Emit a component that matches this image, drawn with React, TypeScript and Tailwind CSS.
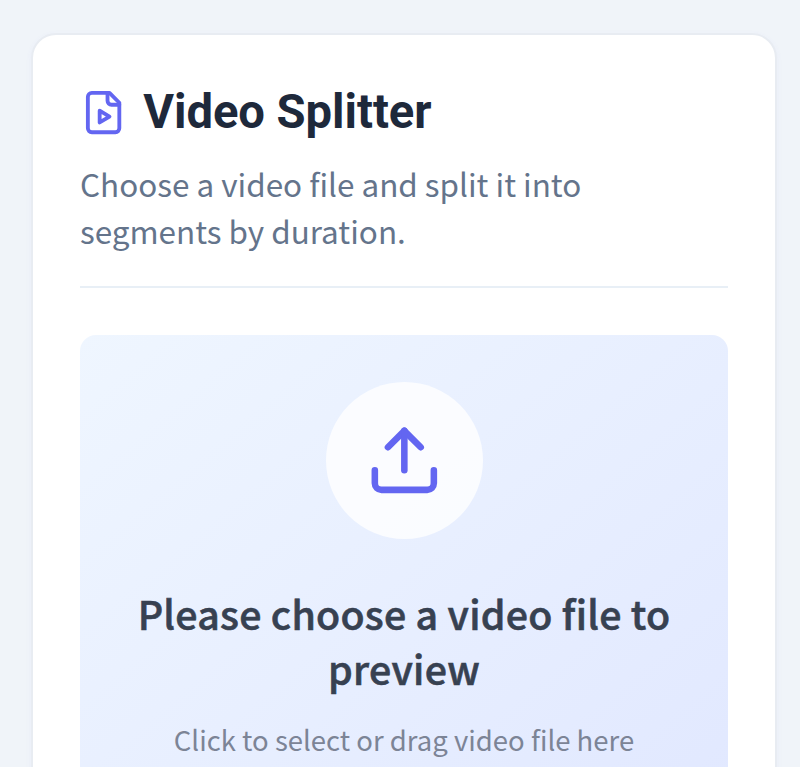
const cjk = "font-['Noto_Sans_CJK_SC',sans-serif]";

function FileVideoIcon() {
  return (
    <svg className="size-[47.2px] shrink-0 text-[#6366f1]" viewBox="0 0 24 24" fill="none" stroke="currentColor" strokeWidth="1.95" strokeLinecap="round" strokeLinejoin="round">
      <path d="M15 2H6a2 2 0 0 0-2 2v16a2 2 0 0 0 2 2h12a2 2 0 0 0 2-2V7Z" />
      <path d="M14 2v4a2 2 0 0 0 2 2h4" />
      <path d="m10 11 5 3-5 3v-6Z" />
    </svg>
  );
}

function UploadIcon() {
  return (
    <svg className="size-[78.7px] text-[#6366f1]" viewBox="0 0 24 24" fill="none" stroke="currentColor" strokeWidth="2" strokeLinecap="round" strokeLinejoin="round">
      <path d="M21 15v4a2 2 0 0 1-2 2H5a2 2 0 0 1-2-2v-4" />
      <path d="m17 8-5-5-5 5" />
      <path d="M12 3v12" />
    </svg>
  );
}

export default function App() {
  return (
    <main className={`h-[767px] overflow-hidden bg-[#f0f4f9] pt-[33px] pr-[23px] pl-[31px] ${cjk}`}>
      <section className="h-[900px] rounded-[25px] border-2 border-[#e8ecf2] bg-white px-[47px] pt-[54px] shadow-[0_2px_6px_rgba(99,102,241,0.05)]">
        <header className="border-b-2 border-[#e8eff6] pb-[31.6px]">
          <div className="flex h-[47px] items-center gap-4">
            <FileVideoIcon />
            <h1 className="font-[Roboto,sans-serif] text-[47.2px] leading-[47px] font-bold tracking-[-0.05px] whitespace-nowrap text-[#1e293b]">Video Splitter</h1>
          </div>
          <p className="mt-[24px] text-[31.45px] leading-[47.2px] text-[#64748b]">
            Choose a video file and split it into
            <br />
            segments by duration.
          </p>
        </header>
        <div className="mt-[47px] flex h-[550px] flex-col items-center rounded-2xl bg-linear-to-br from-[#eff6ff] to-[#e0e7ff] pt-[46.5px] text-center">
          <div className="ml-px flex size-[157px] items-center justify-center rounded-full bg-white/80">
            <UploadIcon />
          </div>
          <h2 className="mt-[46px] text-[39.3px] leading-[55px] font-medium tracking-[0.26px] whitespace-nowrap text-[#374151] [-webkit-text-stroke:0.6px_#374151]">
            Please choose a video file to
            <br />
            preview
          </h2>
          <p className="mt-[22px] text-[27.5px] leading-[44px] whitespace-nowrap text-[#7c8496]">Click to select or drag video file here</p>
        </div>
      </section>
    </main>
  );
}
